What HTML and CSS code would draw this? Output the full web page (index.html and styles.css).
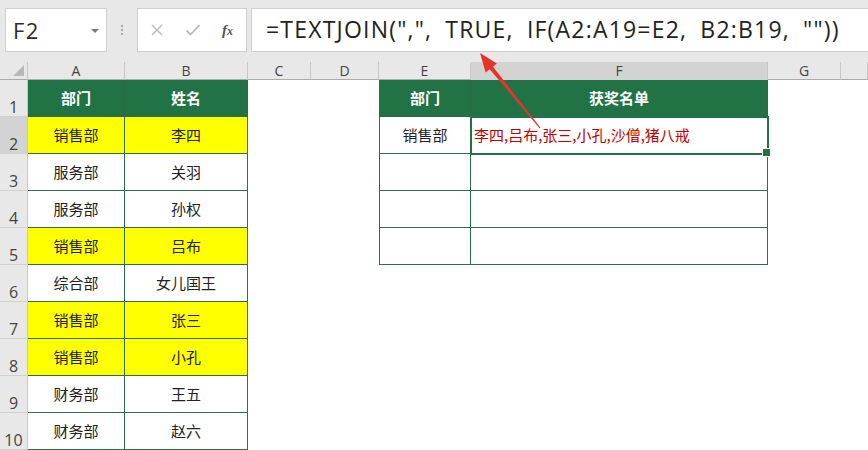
FILE: index.html
```html
<!DOCTYPE html>
<html lang="zh">
<head>
<meta charset="utf-8">
<title>TEXTJOIN</title>
<link rel="stylesheet" href="styles.css">
</head>
<body>
<div class="app">
  <div class="fbar">
    <div class="namebox"><span class="ref">F2</span><span class="caret"></span></div>
    <div class="grip"><i></i><i></i><i></i></div>
    <div class="fxbox">
      <svg class="ico" width="14" height="14" viewBox="0 0 14 14"><path d="M2 2 L12 12 M12 2 L2 12" stroke="#b9b9b9" stroke-width="1.4" fill="none"/></svg>
      <svg class="ico" width="16" height="14" viewBox="0 0 16 14"><path d="M1.5 7.5 L5.5 11.5 L14.5 2" stroke="#b9b9b9" stroke-width="1.8" fill="none"/></svg>
      <span class="fx">f<span class="fxx">x</span></span>
    </div>
    <div class="formula">=TEXTJOIN(",", TRUE, IF(A2:A19=E2, B2:B19, ""))</div>
  </div>
  <div class="sheet">
    <div class="corner"><span class="tri"></span></div>
    <div class="ch">A</div><div class="ch">B</div><div class="ch">C</div><div class="ch">D</div><div class="ch">E</div><div class="ch sel">F</div><div class="ch">G</div><div class="ch"></div>

    <div class="rh">1</div>
    <div class="th">部门</div><div class="th">姓名</div><div class="c"></div><div class="c"></div>
    <div class="th l">部门</div><div class="th">获奖名单</div><div class="c"></div><div class="c"></div>

    <div class="rh sel">2</div>
    <div class="tb y">销售部</div><div class="tb y">李四</div><div class="c"></div><div class="c"></div>
    <div class="tb l">销售部</div><div class="tb active">李四,吕布,张三,小孔,沙僧,猪八戒</div><div class="c"></div><div class="c"></div>

    <div class="rh">3</div>
    <div class="tb">服务部</div><div class="tb">关羽</div><div class="c"></div><div class="c"></div>
    <div class="tb l"></div><div class="tb"></div><div class="c"></div><div class="c"></div>

    <div class="rh">4</div>
    <div class="tb">服务部</div><div class="tb">孙权</div><div class="c"></div><div class="c"></div>
    <div class="tb l"></div><div class="tb"></div><div class="c"></div><div class="c"></div>

    <div class="rh">5</div>
    <div class="tb y">销售部</div><div class="tb y">吕布</div><div class="c"></div><div class="c"></div>
    <div class="tb l"></div><div class="tb"></div><div class="c"></div><div class="c"></div>

    <div class="rh">6</div>
    <div class="tb">综合部</div><div class="tb">女儿国王</div><div class="c"></div><div class="c"></div>
    <div class="c"></div><div class="c"></div><div class="c"></div><div class="c"></div>

    <div class="rh">7</div>
    <div class="tb y">销售部</div><div class="tb y">张三</div><div class="c"></div><div class="c"></div>
    <div class="c"></div><div class="c"></div><div class="c"></div><div class="c"></div>

    <div class="rh">8</div>
    <div class="tb y">销售部</div><div class="tb y">小孔</div><div class="c"></div><div class="c"></div>
    <div class="c"></div><div class="c"></div><div class="c"></div><div class="c"></div>

    <div class="rh">9</div>
    <div class="tb">财务部</div><div class="tb">王五</div><div class="c"></div><div class="c"></div>
    <div class="c"></div><div class="c"></div><div class="c"></div><div class="c"></div>

    <div class="rh">10</div>
    <div class="tb">财务部</div><div class="tb">赵六</div><div class="c"></div><div class="c"></div>
    <div class="c"></div><div class="c"></div><div class="c"></div><div class="c"></div>
  </div>
  <svg class="arrow" width="868" height="450" viewBox="0 0 868 450">
    <polygon points="480,53 496.8,63.6 493,66.7 540.5,127.7 539.5,128.3 489.7,69.3 485.6,72.5" fill="#e8332b"/>
  </svg>
</div>
</body>
</html>
```

FILE: styles.css
```css
* { box-sizing: border-box; }
html, body { margin: 0; padding: 0; }
body {
  width: 868px;
  height: 450px;
  overflow: hidden;
  background: #ffffff;
  font-family: "Noto Sans", "Noto Sans CJK SC", sans-serif;
}
.app {
  position: relative;
  width: 868px;
  height: 450px;
  overflow: hidden;
}
.fbar {
  height: 62px;
  background: #e8e8e8;
  display: flex;
  align-items: flex-start;
  padding: 8px 0 0 5px;
}
.namebox {
  width: 102px;
  height: 44px;
  background: #fff;
  border: 1px solid #d0d0d0;
  display: flex;
  align-items: center;
  justify-content: space-between;
  padding: 0 7px 0 7px;
}
.ref {
  font-family: "Open Sans", "Noto Sans", sans-serif;
  font-size: 22px;
  color: #2b2b2b;
  letter-spacing: 1.5px;
}
.caret {
  width: 0;
  height: 0;
  border-left: 4px solid transparent;
  border-right: 4px solid transparent;
  border-top: 4px solid #777;
  margin-top: 1px;
}
.grip {
  width: 30px;
  height: 44px;
  display: flex;
  flex-direction: column;
  align-items: center;
  justify-content: center;
  gap: 2px;
}
.grip i {
  display: block;
  width: 2px;
  height: 2px;
  background: #a8a8a8;
}
.fxbox {
  width: 110px;
  height: 44px;
  background: #fff;
  border: 1px solid #d0d0d0;
  display: flex;
  align-items: center;
  padding: 0 0 0 12px;
  gap: 21px;
}
.fx {
  font-family: "Liberation Serif", "DejaVu Serif", serif;
  font-style: italic;
  font-weight: 700;
  font-size: 15px;
  color: #555;
  margin-left: 0;
}
.fxx { font-size: 12px; }
.formula {
  flex: 1;
  height: 44px;
  margin-left: 4px;
  margin-right: -2px;
  background: #fff;
  border: 1px solid #d0d0d0;
  font-family: "Open Sans", "Noto Sans", sans-serif;
  font-size: 23px;
  letter-spacing: 1.2px;
  word-spacing: 6px;
  color: #222;
  display: flex;
  align-items: center;
  padding: 0 0 2px 14px;
  white-space: nowrap;
}
.sheet {
  display: grid;
  grid-template-columns: 28px 97px 123px 63px 68px 92px 297px 73px 27px;
  grid-template-rows: 18px repeat(10, 37px);
}
.corner {
  background: #e8e8e8;
  border-right: 1px solid #c8c8c8;
  border-bottom: 1px solid #ababab;
  position: relative;
}
.tri {
  position: absolute;
  right: 3px;
  bottom: 3px;
  width: 0;
  height: 0;
  border-left: 11px solid transparent;
  border-bottom: 11px solid #b8b8b8;
}
.ch {
  background: #e8e8e8;
  border-right: 1px solid #c8c8c8;
  border-bottom: 1px solid #ababab;
  font-family: "Open Sans", "Noto Sans", sans-serif;
  font-size: 14px;
  color: #444;
  display: flex;
  align-items: center;
  justify-content: center;
  line-height: 1;
  padding-top: 1px;
}
.ch.sel { background: #d3d3d3; border-bottom-color: #d3d3d3; }
.rh {
  background: #e8e8e8;
  border-right: 1px solid #c8c8c8;
  border-bottom: 1px solid #d0d0d0;
  font-family: "Open Sans", "Noto Sans", sans-serif;
  font-size: 16px;
  color: #444;
  display: flex;
  align-items: flex-end;
  justify-content: center;
  line-height: 1;
  padding-bottom: 1px;
}
.rh.sel { background: #d3d3d3; }
.c { background: #fff; }
.th, .tb {
  font-family: "Noto Sans CJK SC", "Noto Sans", sans-serif;
  font-size: 15px;
  display: flex;
  align-items: center;
  justify-content: center;
  line-height: 1;
  padding-bottom: 1px;
  border-right: 1px solid #2f6d4d;
  border-bottom: 1px solid #2f6d4d;
}
.th {
  background: #217346;
  color: #fff;
  font-weight: 700;
  border-color: #2a6a47;
}
.tb {
  background: #fff;
  color: #222;
}
.tb.y { background: #ffff00; }
.l { border-left: 1px solid #2f6d4d; }
.tb.active {
  justify-content: flex-start;
  padding-left: 3px;
  color: #c00000;
  position: relative;
  outline: 2px solid #217346;
  outline-offset: -1px;
}
.tb.active::after {
  content: "";
  position: absolute;
  right: -4px;
  bottom: -4px;
  width: 7px;
  height: 7px;
  background: #217346;
  border: 1px solid #fff;
}
.arrow {
  position: absolute;
  left: 0;
  top: 0;
  pointer-events: none;
}
```
